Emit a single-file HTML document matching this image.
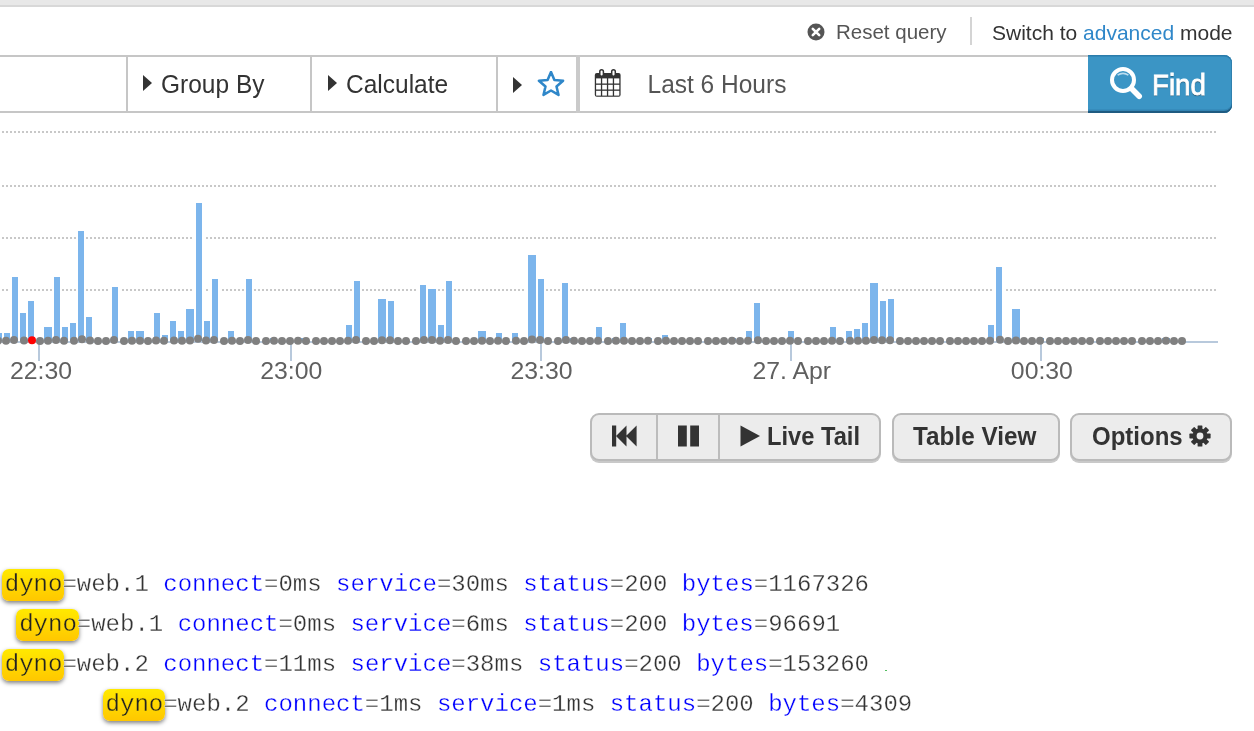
<!DOCTYPE html>
<html><head><meta charset="utf-8"><style>
html,body{margin:0;padding:0;background:#fff;width:1254px;height:731px;overflow:hidden;position:relative;font-family:"Liberation Sans",sans-serif;}
.wrap{position:absolute;left:0;top:0;width:1254px;height:731px;will-change:transform;background:#fff;}
.abs{position:absolute;}
.topstrip{position:absolute;left:0;top:0;width:1254px;height:5px;background:#e8e8e8;border-bottom:2px solid #d8d8d8;}
.t{position:absolute;white-space:nowrap;line-height:1;}
.qbar{position:absolute;left:0;top:55px;width:1088px;height:54px;border-top:2px solid #c6c6c6;border-bottom:2px solid #c6c6c6;background:#fff;}
.vdiv{position:absolute;top:55px;width:2px;height:58px;background:#c6c6c6;}
.tri{position:absolute;width:0;height:0;border-top:8px solid transparent;border-bottom:8px solid transparent;border-left:9px solid #333;}
.find{position:absolute;left:1088px;top:55px;width:144px;height:58px;background:#3b95c5;border-radius:0 8px 8px 0;box-shadow:inset 0 -2px 0 #1f5b81, inset 0 -3.5px 0 #3384b3, inset 0 1.5px 0 #2b7cab, inset -1px 0 0 #3080ae;}
.btn{position:absolute;top:413px;height:48px;background:#ececec;border:2px solid #bababa;border-radius:9px;box-shadow:0 2px 0 #c9c9c9;box-sizing:border-box;}
.bt{position:absolute;font-weight:bold;color:#333;font-size:24px;line-height:1;white-space:nowrap;}
.log{position:absolute;font-family:"Liberation Mono",monospace;font-size:24px;line-height:32px;white-space:pre;color:#333;}
.log .k{color:#0000ff;-webkit-text-stroke:0.3px #fff;}
.log .v{color:#333;-webkit-text-stroke:0.3px #fff;}
.log .hl{background:linear-gradient(#ffe900,#ffc700);border-radius:7px;padding:2px 2px 3px 3px;margin:0 -2px 0 -3px;box-shadow:0 2px 4px rgba(0,0,0,0.5);color:#222;-webkit-text-stroke:0.3px #ffd900;}
</style></head><body><div class="wrap">
<div class="topstrip"></div>

<!-- reset / switch -->
<svg class="abs" style="left:807px;top:23px" width="18" height="18" viewBox="0 0 18 18"><circle cx="9" cy="9" r="8.5" fill="#555"/><path d="M5.8 5.8 L12.2 12.2 M12.2 5.8 L5.8 12.2" stroke="#fff" stroke-width="2.6" stroke-linecap="round"/></svg>
<div class="t" style="left:836px;top:22px;font-size:20.5px;color:#555">Reset query</div>
<div class="abs" style="left:970px;top:17px;width:2px;height:28px;background:#d4d4d4"></div>
<div class="t" style="left:992px;top:21.5px;font-size:21px;color:#333">Switch to <span style="color:#2f87c9">advanced</span> mode</div>

<!-- query bar -->
<div class="qbar"></div>
<div class="vdiv" style="left:126px"></div>
<div class="vdiv" style="left:310px"></div>
<div class="vdiv" style="left:496px"></div>
<div class="vdiv" style="left:576px;width:4px;background:#cacaca"></div>
<div class="tri" style="left:142.5px;top:75.3px"></div>
<div class="t" style="left:161px;top:72.5px;font-size:24.5px;color:#333;transform:scaleY(1.055);transform-origin:0 20.7px">Group By</div>
<div class="tri" style="left:327.5px;top:75px"></div>
<div class="t" style="left:346px;top:72.5px;font-size:24.5px;color:#333;transform:scaleY(1.05);transform-origin:0 20.7px">Calculate</div>
<div class="tri" style="left:512.5px;top:77px"></div>
<svg class="abs" style="left:537px;top:71px" width="28" height="26" viewBox="0 0 28 26"><g transform="translate(14 12.6) scale(1.06) translate(-14 -13)"><path d="M14 2 L17.2 9.6 L25.4 10.3 L19.2 15.7 L21.1 23.7 L14 19.5 L6.9 23.7 L8.8 15.7 L2.6 10.3 L10.8 9.6 Z" fill="none" stroke="#2f87c9" stroke-width="2.4" stroke-linejoin="round"/></g></svg>
<svg class="abs" style="left:590px;top:65px" width="36" height="35" viewBox="0 0 36 35">
<rect x="4.8" y="8.1" width="25.8" height="23.7" rx="2" fill="#333"/>
<rect x="6.1" y="13.4" width="23.2" height="17.2" fill="#fff"/>
<g fill="#333"><rect x="10.9" y="13" width="1.3" height="18"/><rect x="16.9" y="13" width="1.3" height="18"/><rect x="22.8" y="13" width="1.3" height="18"/>
<rect x="5" y="18.5" width="25" height="1.3"/><rect x="5" y="24.5" width="25" height="1.3"/></g>
<rect x="9.8" y="4.8" width="3.6" height="6.4" rx="1.8" fill="#fff" stroke="#333" stroke-width="1.5"/>
<rect x="21.7" y="4.8" width="3.6" height="6.4" rx="1.8" fill="#fff" stroke="#333" stroke-width="1.5"/>
</svg>
<div class="t" style="left:647.5px;top:72.5px;font-size:24.5px;color:#555;transform:scaleY(1.07);transform-origin:0 20.7px">Last 6 Hours</div>

<!-- find -->
<div class="find"></div>
<svg class="abs" style="left:1108px;top:65px" width="36" height="36" viewBox="0 0 36 36"><circle cx="15" cy="15" r="11" fill="none" stroke="#fff" stroke-width="4"/><path d="M23.5 23.5 L31.2 31.2" stroke="#fff" stroke-width="5.6" stroke-linecap="round"/><path d="M9.6 10.2 Q15 6.6 20.4 10.2" fill="none" stroke="#bcdcef" stroke-width="1.6"/></svg>
<div class="t" style="left:1151.5px;top:70px;font-size:30px;color:#fff;-webkit-text-stroke:0.8px #fff;text-shadow:0 1px 1px rgba(0,0,0,0.6);transform:scaleX(0.925);transform-origin:0 0">Find</div>

<!-- chart -->
<svg class="abs" style="left:0;top:0" width="1254" height="400" viewBox="0 0 1254 400">
<line x1="2" y1="132" x2="1216" y2="132" stroke="#c8c8c8" stroke-width="2" stroke-dasharray="2,2" />
<line x1="2" y1="186" x2="1216" y2="186" stroke="#c8c8c8" stroke-width="2" stroke-dasharray="2,2" />
<line x1="2" y1="238" x2="1216" y2="238" stroke="#c8c8c8" stroke-width="2" stroke-dasharray="2,2" />
<line x1="2" y1="290" x2="1216" y2="290" stroke="#c8c8c8" stroke-width="2" stroke-dasharray="2,2" />
<rect x="38" y="342" width="2" height="19" fill="#b8c9dc"/>
<rect x="290" y="342" width="2" height="19" fill="#b8c9dc"/>
<rect x="540" y="342" width="2" height="19" fill="#b8c9dc"/>
<rect x="790" y="342" width="2" height="19" fill="#b8c9dc"/>
<rect x="1040" y="342" width="2" height="19" fill="#b8c9dc"/>
<rect x="-6" y="331" width="10" height="11" fill="#ffffff"/>
<rect x="2" y="331" width="10" height="11" fill="#ffffff"/>
<rect x="10" y="275" width="10" height="67" fill="#ffffff"/>
<rect x="18" y="311" width="10" height="31" fill="#ffffff"/>
<rect x="26" y="299" width="10" height="43" fill="#ffffff"/>
<rect x="42" y="325" width="12" height="17" fill="#ffffff"/>
<rect x="52" y="275" width="10" height="67" fill="#ffffff"/>
<rect x="60" y="325" width="10" height="17" fill="#ffffff"/>
<rect x="68" y="321" width="10" height="21" fill="#ffffff"/>
<rect x="76" y="229" width="10" height="113" fill="#ffffff"/>
<rect x="84" y="315" width="10" height="27" fill="#ffffff"/>
<rect x="110" y="285" width="10" height="57" fill="#ffffff"/>
<rect x="126" y="329" width="10" height="13" fill="#ffffff"/>
<rect x="134" y="329" width="12" height="13" fill="#ffffff"/>
<rect x="152" y="311" width="10" height="31" fill="#ffffff"/>
<rect x="160" y="333" width="10" height="9" fill="#ffffff"/>
<rect x="168" y="319" width="10" height="23" fill="#ffffff"/>
<rect x="176" y="329" width="10" height="13" fill="#ffffff"/>
<rect x="184" y="307" width="12" height="35" fill="#ffffff"/>
<rect x="194" y="201" width="10" height="141" fill="#ffffff"/>
<rect x="202" y="319" width="10" height="23" fill="#ffffff"/>
<rect x="210" y="277" width="10" height="65" fill="#ffffff"/>
<rect x="226" y="329" width="10" height="13" fill="#ffffff"/>
<rect x="244" y="277" width="10" height="65" fill="#ffffff"/>
<rect x="268" y="336" width="8" height="6" fill="#ffffff"/>
<rect x="297" y="336" width="8" height="6" fill="#ffffff"/>
<rect x="344" y="323" width="10" height="19" fill="#ffffff"/>
<rect x="352" y="279" width="10" height="63" fill="#ffffff"/>
<rect x="376" y="297" width="12" height="45" fill="#ffffff"/>
<rect x="386" y="299" width="10" height="43" fill="#ffffff"/>
<rect x="418" y="283" width="10" height="59" fill="#ffffff"/>
<rect x="426" y="287" width="12" height="55" fill="#ffffff"/>
<rect x="436" y="323" width="10" height="19" fill="#ffffff"/>
<rect x="444" y="279" width="10" height="63" fill="#ffffff"/>
<rect x="476" y="329" width="12" height="13" fill="#ffffff"/>
<rect x="494" y="331" width="10" height="11" fill="#ffffff"/>
<rect x="510" y="331" width="10" height="11" fill="#ffffff"/>
<rect x="526" y="253" width="12" height="89" fill="#ffffff"/>
<rect x="536" y="277" width="10" height="65" fill="#ffffff"/>
<rect x="560" y="281" width="10" height="61" fill="#ffffff"/>
<rect x="568" y="336" width="8" height="6" fill="#ffffff"/>
<rect x="594" y="325" width="10" height="17" fill="#ffffff"/>
<rect x="610" y="336" width="8" height="6" fill="#ffffff"/>
<rect x="618" y="321" width="10" height="21" fill="#ffffff"/>
<rect x="646" y="336" width="8" height="6" fill="#ffffff"/>
<rect x="660" y="333" width="10" height="9" fill="#ffffff"/>
<rect x="730" y="336" width="8" height="6" fill="#ffffff"/>
<rect x="744" y="329" width="10" height="13" fill="#ffffff"/>
<rect x="752" y="301" width="10" height="41" fill="#ffffff"/>
<rect x="786" y="329" width="10" height="13" fill="#ffffff"/>
<rect x="828" y="325" width="10" height="17" fill="#ffffff"/>
<rect x="844" y="329" width="10" height="13" fill="#ffffff"/>
<rect x="852" y="327" width="10" height="15" fill="#ffffff"/>
<rect x="860" y="321" width="10" height="21" fill="#ffffff"/>
<rect x="868" y="281" width="12" height="61" fill="#ffffff"/>
<rect x="878" y="299" width="10" height="43" fill="#ffffff"/>
<rect x="886" y="297" width="10" height="45" fill="#ffffff"/>
<rect x="986" y="323" width="10" height="19" fill="#ffffff"/>
<rect x="994" y="265" width="10" height="77" fill="#ffffff"/>
<rect x="1010" y="307" width="12" height="35" fill="#ffffff"/>
<rect x="1038" y="336" width="8" height="6" fill="#ffffff"/>
<rect x="1160" y="336" width="12" height="6" fill="#ffffff"/>
<rect x="-4" y="333" width="6" height="9" fill="#7cb5ec"/>
<rect x="4" y="333" width="6" height="9" fill="#7cb5ec"/>
<rect x="12" y="277" width="6" height="65" fill="#7cb5ec"/>
<rect x="20" y="313" width="6" height="29" fill="#7cb5ec"/>
<rect x="28" y="301" width="6" height="41" fill="#7cb5ec"/>
<rect x="44" y="327" width="8" height="15" fill="#7cb5ec"/>
<rect x="54" y="277" width="6" height="65" fill="#7cb5ec"/>
<rect x="62" y="327" width="6" height="15" fill="#7cb5ec"/>
<rect x="70" y="323" width="6" height="19" fill="#7cb5ec"/>
<rect x="78" y="231" width="6" height="111" fill="#7cb5ec"/>
<rect x="86" y="317" width="6" height="25" fill="#7cb5ec"/>
<rect x="112" y="287" width="6" height="55" fill="#7cb5ec"/>
<rect x="128" y="331" width="6" height="11" fill="#7cb5ec"/>
<rect x="136" y="331" width="8" height="11" fill="#7cb5ec"/>
<rect x="154" y="313" width="6" height="29" fill="#7cb5ec"/>
<rect x="162" y="335" width="6" height="7" fill="#7cb5ec"/>
<rect x="170" y="321" width="6" height="21" fill="#7cb5ec"/>
<rect x="178" y="331" width="6" height="11" fill="#7cb5ec"/>
<rect x="186" y="309" width="8" height="33" fill="#7cb5ec"/>
<rect x="196" y="203" width="6" height="139" fill="#7cb5ec"/>
<rect x="204" y="321" width="6" height="21" fill="#7cb5ec"/>
<rect x="212" y="279" width="6" height="63" fill="#7cb5ec"/>
<rect x="228" y="331" width="6" height="11" fill="#7cb5ec"/>
<rect x="246" y="279" width="6" height="63" fill="#7cb5ec"/>
<rect x="270" y="338" width="4" height="4" fill="#7cb5ec"/>
<rect x="299" y="338" width="4" height="4" fill="#7cb5ec"/>
<rect x="346" y="325" width="6" height="17" fill="#7cb5ec"/>
<rect x="354" y="281" width="6" height="61" fill="#7cb5ec"/>
<rect x="378" y="299" width="8" height="43" fill="#7cb5ec"/>
<rect x="388" y="301" width="6" height="41" fill="#7cb5ec"/>
<rect x="420" y="285" width="6" height="57" fill="#7cb5ec"/>
<rect x="428" y="289" width="8" height="53" fill="#7cb5ec"/>
<rect x="438" y="325" width="6" height="17" fill="#7cb5ec"/>
<rect x="446" y="281" width="6" height="61" fill="#7cb5ec"/>
<rect x="478" y="331" width="8" height="11" fill="#7cb5ec"/>
<rect x="496" y="333" width="6" height="9" fill="#7cb5ec"/>
<rect x="512" y="333" width="6" height="9" fill="#7cb5ec"/>
<rect x="528" y="255" width="8" height="87" fill="#7cb5ec"/>
<rect x="538" y="279" width="6" height="63" fill="#7cb5ec"/>
<rect x="562" y="283" width="6" height="59" fill="#7cb5ec"/>
<rect x="570" y="338" width="4" height="4" fill="#7cb5ec"/>
<rect x="596" y="327" width="6" height="15" fill="#7cb5ec"/>
<rect x="612" y="338" width="4" height="4" fill="#7cb5ec"/>
<rect x="620" y="323" width="6" height="19" fill="#7cb5ec"/>
<rect x="648" y="338" width="4" height="4" fill="#7cb5ec"/>
<rect x="662" y="335" width="6" height="7" fill="#7cb5ec"/>
<rect x="732" y="338" width="4" height="4" fill="#7cb5ec"/>
<rect x="746" y="331" width="6" height="11" fill="#7cb5ec"/>
<rect x="754" y="303" width="6" height="39" fill="#7cb5ec"/>
<rect x="788" y="331" width="6" height="11" fill="#7cb5ec"/>
<rect x="830" y="327" width="6" height="15" fill="#7cb5ec"/>
<rect x="846" y="331" width="6" height="11" fill="#7cb5ec"/>
<rect x="854" y="329" width="6" height="13" fill="#7cb5ec"/>
<rect x="862" y="323" width="6" height="19" fill="#7cb5ec"/>
<rect x="870" y="283" width="8" height="59" fill="#7cb5ec"/>
<rect x="880" y="301" width="6" height="41" fill="#7cb5ec"/>
<rect x="888" y="299" width="6" height="43" fill="#7cb5ec"/>
<rect x="988" y="325" width="6" height="17" fill="#7cb5ec"/>
<rect x="996" y="267" width="6" height="75" fill="#7cb5ec"/>
<rect x="1012" y="309" width="8" height="33" fill="#7cb5ec"/>
<rect x="1040" y="338" width="4" height="4" fill="#7cb5ec"/>
<rect x="1162" y="338" width="8" height="4" fill="#7cb5ec"/>
<rect x="0" y="341" width="1218" height="2" fill="#b8c9dc"/>
<circle cx="-2.00" cy="340.78" r="4" fill="#808080"/>
<circle cx="6.00" cy="340.78" r="4" fill="#808080"/>
<circle cx="14.00" cy="339.94" r="4" fill="#808080"/>
<circle cx="24.00" cy="340.48" r="4" fill="#808080"/>
<circle cx="32.00" cy="340.30" r="4" fill="#ff0000"/>
<circle cx="40.00" cy="340.90" r="4" fill="#808080"/>
<circle cx="48.00" cy="340.69" r="4" fill="#808080"/>
<circle cx="56.00" cy="339.94" r="4" fill="#808080"/>
<circle cx="64.00" cy="340.69" r="4" fill="#808080"/>
<circle cx="74.00" cy="340.63" r="4" fill="#808080"/>
<circle cx="82.00" cy="339.25" r="4" fill="#808080"/>
<circle cx="90.00" cy="340.54" r="4" fill="#808080"/>
<circle cx="98.00" cy="340.90" r="4" fill="#808080"/>
<circle cx="106.00" cy="340.90" r="4" fill="#808080"/>
<circle cx="114.00" cy="340.09" r="4" fill="#808080"/>
<circle cx="124.00" cy="340.90" r="4" fill="#808080"/>
<circle cx="132.00" cy="340.75" r="4" fill="#808080"/>
<circle cx="140.00" cy="340.75" r="4" fill="#808080"/>
<circle cx="148.00" cy="340.90" r="4" fill="#808080"/>
<circle cx="156.00" cy="340.48" r="4" fill="#808080"/>
<circle cx="164.00" cy="340.81" r="4" fill="#808080"/>
<circle cx="174.00" cy="340.60" r="4" fill="#808080"/>
<circle cx="182.00" cy="340.75" r="4" fill="#808080"/>
<circle cx="190.00" cy="340.42" r="4" fill="#808080"/>
<circle cx="198.00" cy="338.83" r="4" fill="#808080"/>
<circle cx="206.00" cy="340.60" r="4" fill="#808080"/>
<circle cx="214.00" cy="339.97" r="4" fill="#808080"/>
<circle cx="224.00" cy="340.90" r="4" fill="#808080"/>
<circle cx="232.00" cy="340.75" r="4" fill="#808080"/>
<circle cx="240.00" cy="340.90" r="4" fill="#808080"/>
<circle cx="248.00" cy="339.97" r="4" fill="#808080"/>
<circle cx="256.00" cy="340.90" r="4" fill="#808080"/>
<circle cx="266.00" cy="340.90" r="4" fill="#808080"/>
<circle cx="274.00" cy="340.85" r="4" fill="#808080"/>
<circle cx="282.00" cy="340.90" r="4" fill="#808080"/>
<circle cx="290.00" cy="340.90" r="4" fill="#808080"/>
<circle cx="298.00" cy="340.85" r="4" fill="#808080"/>
<circle cx="306.00" cy="340.90" r="4" fill="#808080"/>
<circle cx="316.00" cy="340.90" r="4" fill="#808080"/>
<circle cx="324.00" cy="340.90" r="4" fill="#808080"/>
<circle cx="332.00" cy="340.90" r="4" fill="#808080"/>
<circle cx="340.00" cy="340.90" r="4" fill="#808080"/>
<circle cx="348.00" cy="340.66" r="4" fill="#808080"/>
<circle cx="356.00" cy="340.00" r="4" fill="#808080"/>
<circle cx="366.00" cy="340.90" r="4" fill="#808080"/>
<circle cx="374.00" cy="340.90" r="4" fill="#808080"/>
<circle cx="382.00" cy="340.27" r="4" fill="#808080"/>
<circle cx="390.00" cy="340.30" r="4" fill="#808080"/>
<circle cx="398.00" cy="340.90" r="4" fill="#808080"/>
<circle cx="406.00" cy="340.90" r="4" fill="#808080"/>
<circle cx="416.00" cy="340.90" r="4" fill="#808080"/>
<circle cx="424.00" cy="340.06" r="4" fill="#808080"/>
<circle cx="432.00" cy="340.12" r="4" fill="#808080"/>
<circle cx="440.00" cy="340.66" r="4" fill="#808080"/>
<circle cx="448.00" cy="340.00" r="4" fill="#808080"/>
<circle cx="456.00" cy="340.90" r="4" fill="#808080"/>
<circle cx="466.00" cy="340.90" r="4" fill="#808080"/>
<circle cx="474.00" cy="340.90" r="4" fill="#808080"/>
<circle cx="482.00" cy="340.75" r="4" fill="#808080"/>
<circle cx="490.00" cy="340.90" r="4" fill="#808080"/>
<circle cx="498.00" cy="340.78" r="4" fill="#808080"/>
<circle cx="506.00" cy="340.90" r="4" fill="#808080"/>
<circle cx="516.00" cy="340.78" r="4" fill="#808080"/>
<circle cx="524.00" cy="340.90" r="4" fill="#808080"/>
<circle cx="532.00" cy="339.61" r="4" fill="#808080"/>
<circle cx="540.00" cy="339.97" r="4" fill="#808080"/>
<circle cx="548.00" cy="340.90" r="4" fill="#808080"/>
<circle cx="558.00" cy="340.90" r="4" fill="#808080"/>
<circle cx="566.00" cy="340.03" r="4" fill="#808080"/>
<circle cx="574.00" cy="340.85" r="4" fill="#808080"/>
<circle cx="582.00" cy="340.90" r="4" fill="#808080"/>
<circle cx="590.00" cy="340.90" r="4" fill="#808080"/>
<circle cx="598.00" cy="340.69" r="4" fill="#808080"/>
<circle cx="608.00" cy="340.90" r="4" fill="#808080"/>
<circle cx="616.00" cy="340.85" r="4" fill="#808080"/>
<circle cx="624.00" cy="340.63" r="4" fill="#808080"/>
<circle cx="632.00" cy="340.90" r="4" fill="#808080"/>
<circle cx="640.00" cy="340.90" r="4" fill="#808080"/>
<circle cx="648.00" cy="340.85" r="4" fill="#808080"/>
<circle cx="658.00" cy="340.90" r="4" fill="#808080"/>
<circle cx="666.00" cy="340.81" r="4" fill="#808080"/>
<circle cx="674.00" cy="340.90" r="4" fill="#808080"/>
<circle cx="682.00" cy="340.90" r="4" fill="#808080"/>
<circle cx="690.00" cy="340.90" r="4" fill="#808080"/>
<circle cx="698.00" cy="340.90" r="4" fill="#808080"/>
<circle cx="708.00" cy="340.90" r="4" fill="#808080"/>
<circle cx="716.00" cy="340.90" r="4" fill="#808080"/>
<circle cx="724.00" cy="340.90" r="4" fill="#808080"/>
<circle cx="732.00" cy="340.85" r="4" fill="#808080"/>
<circle cx="740.00" cy="340.90" r="4" fill="#808080"/>
<circle cx="748.00" cy="340.75" r="4" fill="#808080"/>
<circle cx="758.00" cy="340.33" r="4" fill="#808080"/>
<circle cx="766.00" cy="340.90" r="4" fill="#808080"/>
<circle cx="774.00" cy="340.90" r="4" fill="#808080"/>
<circle cx="782.00" cy="340.90" r="4" fill="#808080"/>
<circle cx="790.00" cy="340.75" r="4" fill="#808080"/>
<circle cx="798.00" cy="340.90" r="4" fill="#808080"/>
<circle cx="808.00" cy="340.90" r="4" fill="#808080"/>
<circle cx="816.00" cy="340.90" r="4" fill="#808080"/>
<circle cx="824.00" cy="340.90" r="4" fill="#808080"/>
<circle cx="832.00" cy="340.69" r="4" fill="#808080"/>
<circle cx="840.00" cy="340.90" r="4" fill="#808080"/>
<circle cx="850.00" cy="340.75" r="4" fill="#808080"/>
<circle cx="858.00" cy="340.72" r="4" fill="#808080"/>
<circle cx="866.00" cy="340.63" r="4" fill="#808080"/>
<circle cx="874.00" cy="340.03" r="4" fill="#808080"/>
<circle cx="882.00" cy="340.30" r="4" fill="#808080"/>
<circle cx="890.00" cy="340.27" r="4" fill="#808080"/>
<circle cx="900.00" cy="340.90" r="4" fill="#808080"/>
<circle cx="908.00" cy="340.90" r="4" fill="#808080"/>
<circle cx="916.00" cy="340.90" r="4" fill="#808080"/>
<circle cx="924.00" cy="340.90" r="4" fill="#808080"/>
<circle cx="932.00" cy="340.90" r="4" fill="#808080"/>
<circle cx="940.00" cy="340.90" r="4" fill="#808080"/>
<circle cx="950.00" cy="340.90" r="4" fill="#808080"/>
<circle cx="958.00" cy="340.90" r="4" fill="#808080"/>
<circle cx="966.00" cy="340.90" r="4" fill="#808080"/>
<circle cx="974.00" cy="340.90" r="4" fill="#808080"/>
<circle cx="982.00" cy="340.90" r="4" fill="#808080"/>
<circle cx="990.00" cy="340.66" r="4" fill="#808080"/>
<circle cx="1000.00" cy="339.79" r="4" fill="#808080"/>
<circle cx="1008.00" cy="340.90" r="4" fill="#808080"/>
<circle cx="1016.00" cy="340.42" r="4" fill="#808080"/>
<circle cx="1024.00" cy="340.90" r="4" fill="#808080"/>
<circle cx="1032.00" cy="340.90" r="4" fill="#808080"/>
<circle cx="1040.00" cy="340.85" r="4" fill="#808080"/>
<circle cx="1050.00" cy="340.90" r="4" fill="#808080"/>
<circle cx="1058.00" cy="340.90" r="4" fill="#808080"/>
<circle cx="1066.00" cy="340.90" r="4" fill="#808080"/>
<circle cx="1074.00" cy="340.90" r="4" fill="#808080"/>
<circle cx="1082.00" cy="340.90" r="4" fill="#808080"/>
<circle cx="1090.00" cy="340.90" r="4" fill="#808080"/>
<circle cx="1100.00" cy="340.90" r="4" fill="#808080"/>
<circle cx="1108.00" cy="340.90" r="4" fill="#808080"/>
<circle cx="1116.00" cy="340.90" r="4" fill="#808080"/>
<circle cx="1124.00" cy="340.90" r="4" fill="#808080"/>
<circle cx="1132.00" cy="340.90" r="4" fill="#808080"/>
<circle cx="1142.00" cy="340.90" r="4" fill="#808080"/>
<circle cx="1150.00" cy="340.90" r="4" fill="#808080"/>
<circle cx="1158.00" cy="340.90" r="4" fill="#808080"/>
<circle cx="1166.00" cy="340.85" r="4" fill="#808080"/>
<circle cx="1174.00" cy="340.90" r="4" fill="#808080"/>
<circle cx="1182.00" cy="340.90" r="4" fill="#808080"/>
<text x="41" y="379" text-anchor="middle" fill="#606060" font-size="24.8" font-family="Liberation Sans, sans-serif">22:30</text>
<text x="291.3" y="379" text-anchor="middle" fill="#606060" font-size="24.8" font-family="Liberation Sans, sans-serif">23:00</text>
<text x="541.5" y="379" text-anchor="middle" fill="#606060" font-size="24.8" font-family="Liberation Sans, sans-serif">23:30</text>
<text x="791.8" y="379" text-anchor="middle" fill="#606060" font-size="24.8" font-family="Liberation Sans, sans-serif">27. Apr</text>
<text x="1041.9" y="379" text-anchor="middle" fill="#606060" font-size="24.8" font-family="Liberation Sans, sans-serif">00:30</text>
</svg>

<!-- buttons -->
<div class="btn" style="left:590px;width:291px"></div>
<div class="abs" style="left:656px;top:415px;width:2px;height:44px;background:#bcbcbc"></div>
<div class="abs" style="left:718px;top:415px;width:2px;height:44px;background:#bcbcbc"></div>
<svg class="abs" style="left:612px;top:425px" width="26" height="22" viewBox="0 0 26 22"><rect x="0" y="0.5" width="4.2" height="21" fill="#333"/><path d="M4 11 L14.5 0.5 L14.5 21.5 Z M14 11 L24.6 0.5 L24.6 21.5 Z" fill="#333"/></svg>
<svg class="abs" style="left:678px;top:425px" width="22" height="22" viewBox="0 0 22 22"><rect x="0" y="0.5" width="8.8" height="21" fill="#333"/><rect x="12.2" y="0.5" width="8.8" height="21" fill="#333"/></svg>
<svg class="abs" style="left:740px;top:425px" width="21" height="22" viewBox="0 0 21 22"><path d="M0.5 0.5 L20 11 L0.5 21.5 Z" fill="#333"/></svg>
<div class="bt" style="left:767px;top:425.5px;font-size:23.7px;transform:scaleY(1.1);transform-origin:0 20px">Live Tail</div>
<div class="btn" style="left:892px;width:168px"></div>
<div class="bt" style="left:913px;top:425px;font-size:24.3px;transform:scaleY(1.08);transform-origin:0 20.5px">Table View</div>
<div class="btn" style="left:1070px;width:162px"></div>
<div class="bt" style="left:1092px;top:425px;font-size:24px;transform:scaleY(1.09);transform-origin:0 20.3px">Options</div>
<svg class="abs" style="left:1189px;top:425px" width="22" height="22" viewBox="-11 -11 22 22">
<g fill="#333">
<circle r="7.5"/>
<rect x="-2.4" y="-10.6" width="4.8" height="5" rx="0.6"/>
<rect x="-2.4" y="-10.6" width="4.8" height="5" rx="0.6" transform="rotate(45)"/>
<rect x="-2.4" y="-10.6" width="4.8" height="5" rx="0.6" transform="rotate(90)"/>
<rect x="-2.4" y="-10.6" width="4.8" height="5" rx="0.6" transform="rotate(135)"/>
<rect x="-2.4" y="-10.6" width="4.8" height="5" rx="0.6" transform="rotate(180)"/>
<rect x="-2.4" y="-10.6" width="4.8" height="5" rx="0.6" transform="rotate(225)"/>
<rect x="-2.4" y="-10.6" width="4.8" height="5" rx="0.6" transform="rotate(270)"/>
<rect x="-2.4" y="-10.6" width="4.8" height="5" rx="0.6" transform="rotate(315)"/>
</g><circle r="3.4" fill="#ececec"/></svg>

<!-- logs -->
<div class="abs" style="left:884.5px;top:669.5px;width:2px;height:1.5px;background:#3cb44b;border-radius:1px"></div>
<div class="log" style="left:4.8px;top:569px"><span class="hl">dyno</span><span class="v">=web.1 </span><span class="k">connect</span><span class="v">=0ms </span><span class="k">service</span><span class="v">=30ms </span><span class="k">status</span><span class="v">=200 </span><span class="k">bytes</span><span class="v">=1167326</span></div>
<div class="log" style="left:19.2px;top:609px"><span class="hl">dyno</span><span class="v">=web.1 </span><span class="k">connect</span><span class="v">=0ms </span><span class="k">service</span><span class="v">=6ms </span><span class="k">status</span><span class="v">=200 </span><span class="k">bytes</span><span class="v">=96691</span></div>
<div class="log" style="left:4.8px;top:649px"><span class="hl">dyno</span><span class="v">=web.2 </span><span class="k">connect</span><span class="v">=11ms </span><span class="k">service</span><span class="v">=38ms </span><span class="k">status</span><span class="v">=200 </span><span class="k">bytes</span><span class="v">=153260</span></div>
<div class="log" style="left:105.6px;top:689px"><span class="hl">dyno</span><span class="v">=web.2 </span><span class="k">connect</span><span class="v">=1ms </span><span class="k">service</span><span class="v">=1ms </span><span class="k">status</span><span class="v">=200 </span><span class="k">bytes</span><span class="v">=4309</span></div>
</div></body></html>
